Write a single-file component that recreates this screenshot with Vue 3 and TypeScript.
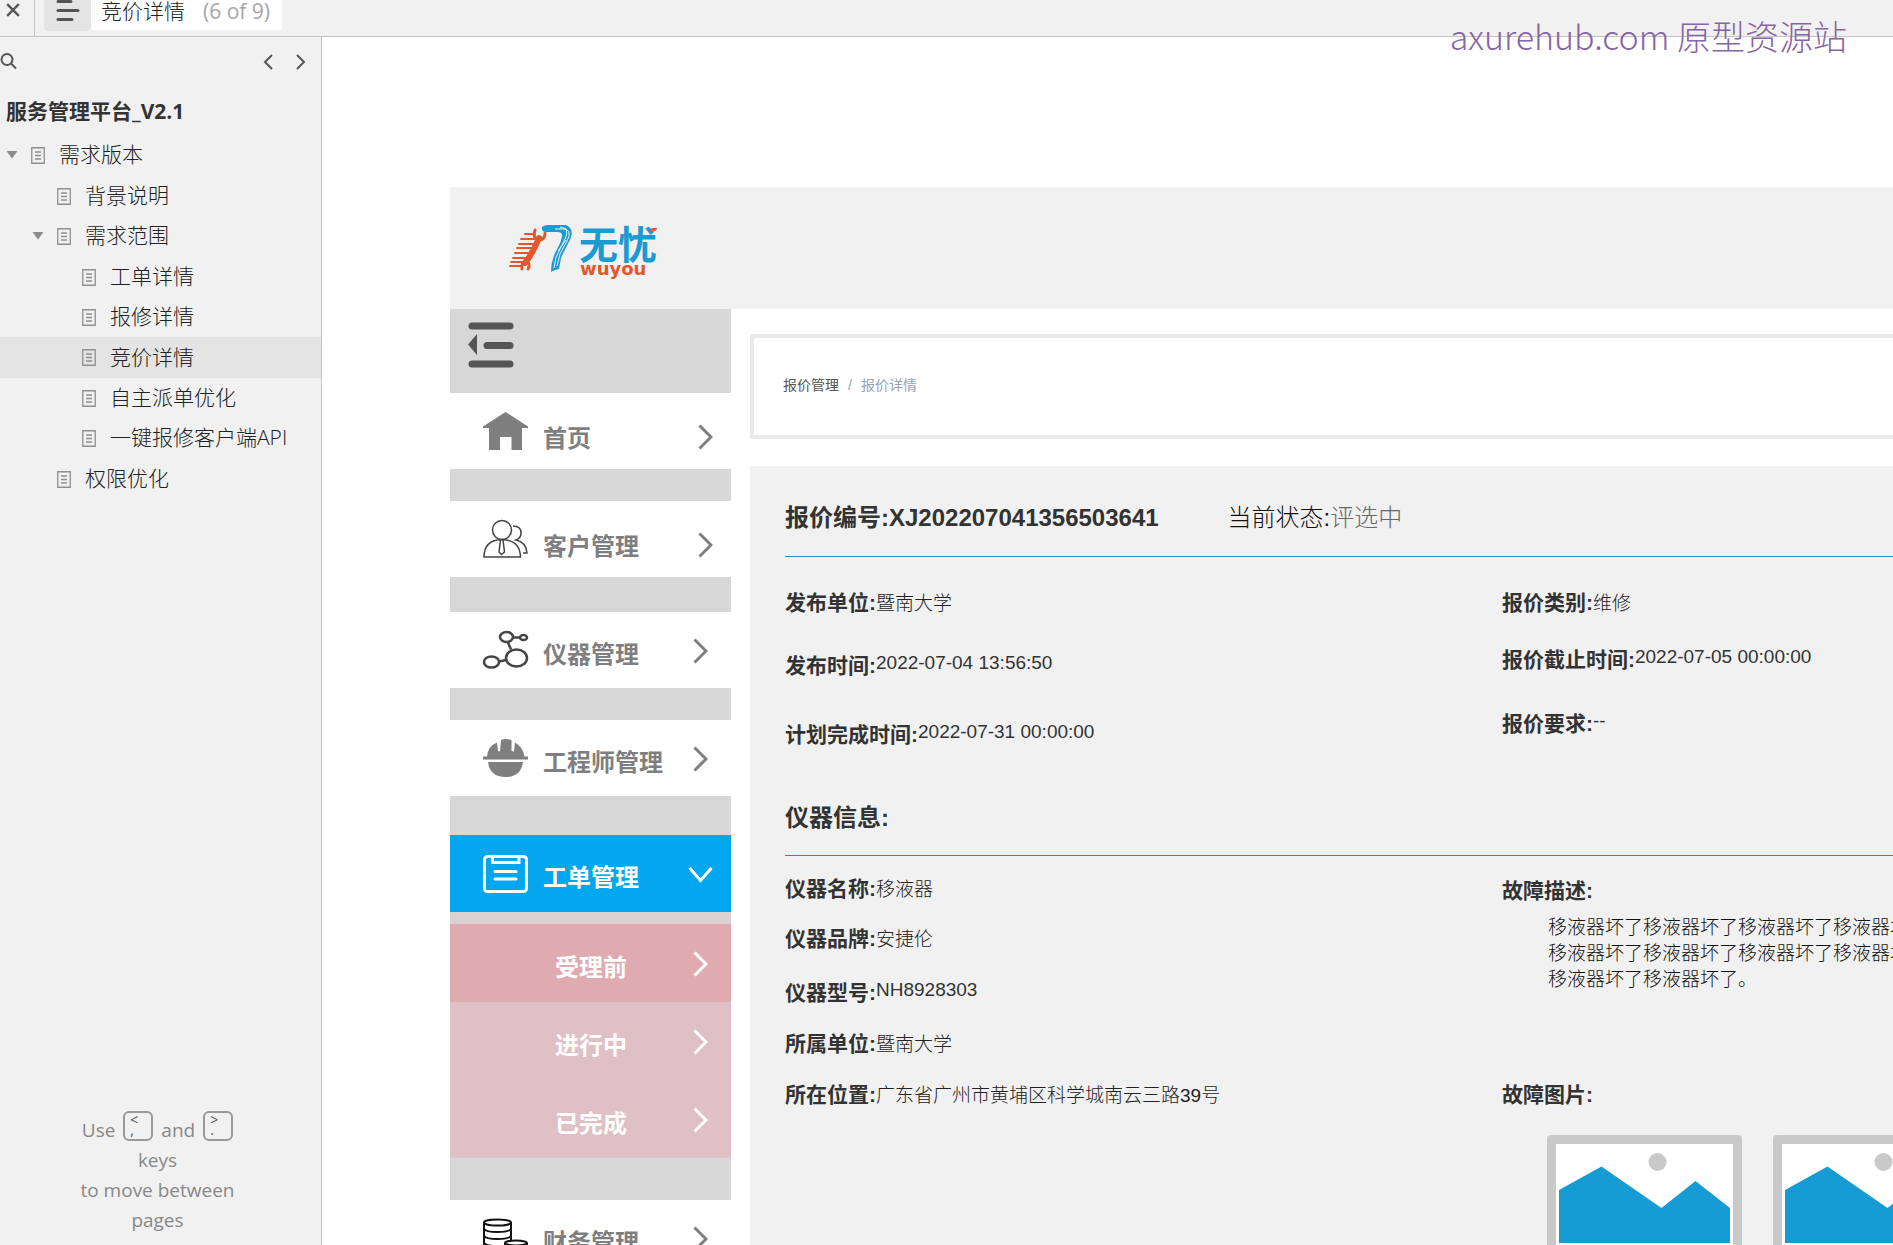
<script setup lang="ts">
type IconName = 'home' | 'users' | 'device' | 'engineer' | 'order' | 'finance'

interface TreeRow {
  name: string
  level: 1 | 2 | 3
  branch?: boolean
  current?: boolean
  turn?: boolean
}

interface MenuEntry {
  name: string
  icon: IconName
  gap: 'none' | 'small' | 'medium' | 'large' | 'huge'
  flush?: boolean
  open?: boolean
  children?: { name: string; current?: boolean }[]
}

interface Fact {
  label: string
  value: string
  latin?: boolean
}

const treeRows: TreeRow[] = [
  { name: '需求版本', level: 1, branch: true },
  { name: '背景说明', level: 2, turn: true },
  { name: '需求范围', level: 2, branch: true },
  { name: '工单详情', level: 3, turn: true },
  { name: '报修详情', level: 3 },
  { name: '竞价详情', level: 3, current: true },
  { name: '自主派单优化', level: 3 },
  { name: '一键报修客户端API', level: 3 },
  { name: '权限优化', level: 2, turn: true },
]

const menu: MenuEntry[] = [
  { name: '首页', icon: 'home', gap: 'none', flush: true },
  { name: '客户管理', icon: 'users', gap: 'small', flush: true },
  { name: '仪器管理', icon: 'device', gap: 'medium' },
  { name: '工程师管理', icon: 'engineer', gap: 'small' },
  {
    name: '工单管理',
    icon: 'order',
    gap: 'large',
    open: true,
    children: [{ name: '受理前', current: true }, { name: '进行中' }, { name: '已完成' }],
  },
  { name: '财务管理', icon: 'finance', gap: 'huge' },
]

const quoteLeft: Fact[] = [
  { label: '发布单位:', value: '暨南大学' },
  { label: '发布时间:', value: '2022-07-04 13:56:50', latin: true },
  { label: '计划完成时间:', value: '2022-07-31 00:00:00', latin: true },
]

const quoteRight: Fact[] = [
  { label: '报价类别:', value: '维修' },
  { label: '报价截止时间:', value: '2022-07-05 00:00:00', latin: true },
  { label: '报价要求:', value: '--', latin: true },
]

const device: Fact[] = [
  { label: '仪器名称:', value: '移液器' },
  { label: '仪器品牌:', value: '安捷伦' },
  { label: '仪器型号:', value: 'NH8928303', latin: true },
  { label: '所属单位:', value: '暨南大学' },
  { label: '所在位置:', value: '广东省广州市黄埔区科学城南云三路39号' },
]

const phrase = '移液器坏了'
const faultLines: string[] = [phrase.repeat(4), phrase.repeat(4), phrase.repeat(2) + '。']
</script>

<template>
  <div class="app">
    <header class="topbar">
      <button class="close" type="button" aria-label="关闭">
        <svg width="14" height="14" viewBox="0 0 12 12"><path d="M1 1 11 11M11 1 1 11" stroke="#555" stroke-width="2" fill="none" /></svg>
      </button>
      <button class="pages" type="button" aria-label="页面列表">
        <svg width="24" height="22" viewBox="0 0 24 22">
          <path d="M2 1.500H15M2 10.500H22M2 19.500H16" stroke="#555" stroke-width="3" stroke-linecap="round" fill="none" />
        </svg>
      </button>
      <div class="page-tab"><span>竞价详情</span><span class="count">(6 of 9)</span></div>
    </header>

    <div class="body">
      <aside class="sidebar">
        <div class="tools">
          <button type="button" aria-label="搜索">
            <svg width="17" height="17" viewBox="0 0 17 17"><circle cx="7" cy="6.500" r="5.500" /><path d="M11 10.500 16 15.500" /></svg>
          </button>
          <span class="spacer"></span>
          <button type="button" aria-label="上一页">
            <svg width="10" height="16" viewBox="0 0 10 16"><path d="M9 1 2 8 9 15" /></svg>
          </button>
          <button type="button" aria-label="下一页">
            <svg width="10" height="16" viewBox="0 0 10 16"><path d="M1 1 8 8 1 15" /></svg>
          </button>
        </div>
        <h1>服务管理平台_V2.1</h1>
        <nav class="tree">
          <a
            v-for="row in treeRows"
            :key="row.name"
            href="#"
            :class="['level-' + row.level, { current: row.current, turn: row.turn }]"
          >
            <span class="twist"><svg v-if="row.branch" width="12" height="8" viewBox="0 0 12 8"><path d="M0.500 0H11.500L6 7.500Z" fill="#8c8c8c" /></svg></span>
            <svg class="sheet" width="14" height="17" viewBox="0 0 14 17">
              <path d="M0.750 0.750H13.250V16.250H0.750ZM4 5H10M4 8.500H10M4 12H10" stroke="#8f8f8f" stroke-width="1.300" fill="none" />
            </svg>
            <span>{{ row.name }}</span>
          </a>
        </nav>
        <div class="hint">
          <div class="hint-keys">
            <span>Use</span>
            <kbd><span>&lt;</span><span>,</span></kbd>
            <span>and</span>
            <kbd><span>&gt;</span><span>.</span></kbd>
          </div>
          <div>keys</div>
          <div>to move between</div>
          <div>pages</div>
        </div>
      </aside>

      <main class="canvas">
        <div class="brand">
          <svg width="156" height="56" viewBox="0 0 156 56" role="img" aria-label="17无忧">
            <g stroke="#e2582c" fill="none" stroke-linecap="round">
              <path d="M31 15Q25 30 17 40" stroke-width="6" />
              <path d="M27 7Q24 15 31 17Q37 17 37 10" stroke-width="3" />
              <path d="M14 46Q13 39 18 38Q23 40 20 46" stroke-width="3" />
              <path d="M17 11H27M13 16H27M11 21H26M9 25H24M7 30H22M5 35H20M3 39H18M2 43H14" stroke-width="2" />
            </g>
            <path d="M34 4Q36 2 40 2H58Q67 6 62 17Q57 26 53 35L51 46L47 47L43 49Q43 38 48 28Q54 18 54 12Q54 9 49 9H38Q33 9 34 4Z" fill="#1c9ad2" />
            <path d="M47 6H57Q61 9 56 18L48 34L46 45M52 4Q66 6 59 18L52 31L49 43M50 28L58 17" stroke="#f1f1f1" stroke-width="1" fill="none" />
            <text class="brand-name" x="71" y="36">无忧</text>
            <text class="brand-latin" x="72" y="52">wuyou</text>
            <path d="M141 9Q143 4 149 5Q149 9 141 9Z" fill="#e2582c" />
          </svg>
        </div>

        <div class="columns">
          <nav class="menu">
            <button class="collapse" type="button" aria-label="收起菜单">
              <svg width="46" height="46" viewBox="0 0 46 46">
                <path d="M4 4H42M19 23.500H42M4 42H42" stroke="#555" stroke-width="7" stroke-linecap="round" />
                <path d="M0 22.500 9 12V33Z" fill="#555" />
              </svg>
            </button>
            <template v-for="entry in menu" :key="entry.name">
              <button type="button" :class="['entry', 'gap-' + entry.gap, { flush: entry.flush, open: entry.open }]">
                <svg v-if="entry.icon === 'home'" class="icon" viewBox="0 0 45 38">
                  <path d="M22.500 0 45 14.500V16H39V38H28.500V25H17V38H6V16H0V14.500Z" fill="#7f7f7f" />
                </svg>
                <svg v-else-if="entry.icon === 'users'" class="icon line" viewBox="0 0 45 38">
                  <ellipse cx="19" cy="10" rx="9.500" ry="9.500" />
                  <path d="M1 37Q1 20 19 19.500Q37 20 37.500 37Z" />
                  <path d="M30 6Q38 6 38 13Q38 18 33 20Q43 22 44 33H40M17.500 20 16 32 18.500 34.500 21.500 32 20 20" />
                </svg>
                <svg v-else-if="entry.icon === 'device'" class="icon node" viewBox="0 0 45 38">
                  <ellipse cx="23.500" cy="6" rx="6.500" ry="5" />
                  <ellipse cx="40.500" cy="6.500" rx="3.500" ry="2.500" />
                  <ellipse cx="33.500" cy="27" rx="10.500" ry="8.500" />
                  <ellipse cx="8.500" cy="31" rx="7.500" ry="5.500" />
                  <path d="M30 6.500H37M25 11.500 28 18.500M16 30.500 23 29" />
                </svg>
                <svg v-else-if="entry.icon === 'engineer'" class="icon" viewBox="0 0 45 38">
                  <path d="M4 17.500Q5 7 14 3.500L15 12L17 12.500L18 1Q23-1 28.500 1V12L31 12.500L32 3.500Q40 8 41.500 17.500H45V20.500H0V17.500ZM5 23H40Q38 38 22.500 38Q7 38 5 23Z" fill="#7f7f7f" />
                </svg>
                <svg v-else-if="entry.icon === 'order'" class="icon" viewBox="0 0 45 38">
                  <g stroke="#fff" stroke-width="3" fill="none" stroke-linecap="round">
                    <rect x="1.500" y="1.500" width="42" height="35" rx="3" />
                    <path d="M9.500 2V7.500H36V2M12 16.500H33M12 24H33" />
                  </g>
                </svg>
                <svg v-else class="icon coins" viewBox="0 0 45 38">
                  <ellipse cx="14.500" cy="3.500" rx="13.500" ry="3" />
                  <path d="M1 3.500V38M28 3.500V22M1 10Q3 13 14.500 13T28 10M1 17Q3 20 14.500 20T28 17M1 24Q3 27 14.500 27H21M1 31Q3 34 14.500 34H21" />
                  <ellipse cx="33" cy="24" rx="11" ry="2.500" />
                  <path d="M22 24V38M44 24V38M22 31Q24 33 33 33T44 31" />
                </svg>
                <span class="label">{{ entry.name }}</span>
                <span class="arrow">
                  <svg v-if="entry.open" width="25" height="17" viewBox="0 0 25 17"><path d="M1.500 2 12.500 14.500 23.500 2" /></svg>
                  <svg v-else width="15" height="26" viewBox="0 0 15 26"><path d="M1.500 1.500 13 13 1.500 24.500" /></svg>
                </span>
              </button>
              <div v-if="entry.children" class="children">
                <button v-for="child in entry.children" :key="child.name" type="button" :class="['child', { current: child.current }]">
                  <span class="label">{{ child.name }}</span>
                  <span class="arrow"><svg width="15" height="26" viewBox="0 0 15 26"><path d="M1.500 1.500 13 13 1.500 24.500" /></svg></span>
                </button>
              </div>
            </template>
          </nav>

          <div class="content">
            <div class="crumbs">
              <a href="#">报价管理</a><span>/</span><span>报价详情</span>
            </div>

            <section class="panel">
              <div class="panel-head">
                <h2>报价编号:XJ202207041356503641</h2>
                <div class="status">当前状态:<span>评选中</span></div>
              </div>
              <div class="pair quote">
                <dl class="quote-left">
                  <div v-for="fact in quoteLeft" :key="fact.label"><dt>{{ fact.label }}</dt><dd :class="{ latin: fact.latin }">{{ fact.value }}</dd></div>
                </dl>
                <dl class="quote-right">
                  <div v-for="fact in quoteRight" :key="fact.label"><dt>{{ fact.label }}</dt><dd :class="{ latin: fact.latin }">{{ fact.value }}</dd></div>
                </dl>
              </div>

              <div class="panel-head second"><h2>仪器信息:</h2></div>
              <div class="pair device">
                <dl class="device-left">
                  <div v-for="fact in device" :key="fact.label"><dt>{{ fact.label }}</dt><dd :class="{ latin: fact.latin }">{{ fact.value }}</dd></div>
                </dl>
                <div class="fault">
                  <h3>故障描述:</h3>
                  <div class="fault-text">
                    <div v-for="(line, index) in faultLines" :key="index">{{ line }}</div>
                  </div>
                  <h3>故障图片:</h3>
                  <div class="photos">
                    <svg v-for="n in 2" :key="n" width="195" height="140" viewBox="0 0 195 140">
                      <rect width="195" height="140" rx="4" fill="#c9c9c9" />
                      <rect x="9" y="9" width="177" height="122" fill="#fff" />
                      <circle cx="110.500" cy="27" r="9" fill="#c9c9c9" />
                      <path d="M12 55 54.500 31.500 114.500 73 148.500 46 183 73V108H12Z" fill="#169bd5" />
                    </svg>
                  </div>
                </div>
              </div>
            </section>
          </div>
        </div>
      </main>
    </div>

    <div class="watermark">axurehub.com 原型资源站</div>
  </div>
</template>

<style>
body {
  margin: 0;
  overflow: hidden;
}
</style>

<style scoped>
.app {
  position: relative;
  display: flex;
  flex-direction: column;
  height: 100vh;
  overflow: hidden;
  background: #fff;
  color: #333;
  font-family: "Liberation Sans", "Noto Sans CJK SC", sans-serif;
}
button {
  border: 0;
  padding: 0;
  background: none;
  font: inherit;
  color: inherit;
  text-align: left;
}
a {
  color: inherit;
  text-decoration: none;
}
h1, h2, h3, dl, dd {
  margin: 0;
}
svg {
  display: block;
  flex: none;
}

.topbar {
  display: flex;
  align-items: flex-start;
  flex: none;
  height: 36px;
  background: #f1f1f1;
  border-bottom: 1px solid #c4c4c4;
  font-family: "Open Sans", "Noto Sans CJK SC", sans-serif;
}
.close {
  box-sizing: border-box;
  width: 35px;
  height: 36px;
  padding: 0 0 17px 6px;
  border-right: 1px solid #c4c4c4;
}
.pages {
  width: 47px;
  height: 31px;
  margin-left: 9px;
  padding: 0 0 9px 12px;
  background: #e4e4e4;
  border-radius: 0 0 4px 4px;
}
.page-tab {
  display: flex;
  gap: 18px;
  height: 30px;
  padding: 0 12px 0 10px;
  background: #fff;
  color: #222;
  font-size: 21px;
  line-height: 22px;
  font-weight: 300;
}
.count {
  color: #a6a6a6;
  font-weight: 400;
}

.body {
  display: flex;
  flex: 1;
  min-height: 0;
}
.sidebar {
  display: flex;
  flex-direction: column;
  flex: none;
  width: 321px;
  background: #f1f1f1;
  border-right: 1px solid #c4c4c4;
  font-family: "Open Sans", "Noto Sans CJK SC", sans-serif;
}
.tools {
  display: flex;
  gap: 23px;
  padding: 16px 15px 0 0;
}
.tools svg {
  fill: none;
  stroke: #555;
  stroke-width: 2;
}
.spacer {
  flex: 1;
}
.sidebar h1 {
  margin: 26px 0 9px;
  padding-left: 6px;
  font-size: 21px;
  line-height: 30px;
}
.tree {
  display: flex;
  flex-direction: column;
}
.tree a {
  display: flex;
  align-items: center;
  height: 40px;
  color: #222;
  font-size: 21px;
  font-weight: 300;
  line-height: 30px;
  white-space: nowrap;
}
.tree a > span:last-child {
  padding-bottom: 2px;
}
.tree .turn {
  margin-top: 1px;
}
.tree .current {
  height: 41px;
  background: #e4e4e4;
}
.level-1 {
  padding-left: 6px;
}
.level-2 {
  padding-left: 32px;
}
.level-3 {
  padding-left: 57px;
}
.twist {
  width: 25px;
}
.sheet {
  margin-right: 14px;
}
.hint {
  margin-top: auto;
  padding: 0 6px 10px 0;
  color: #888;
  font-size: 19px;
  line-height: 30px;
  text-align: center;
}
.hint-keys {
  display: flex;
  justify-content: center;
  align-items: center;
  gap: 8px;
}
.hint-keys > span {
  padding-top: 8px;
}
kbd {
  display: flex;
  flex-direction: column;
  box-sizing: border-box;
  width: 30px;
  height: 30px;
  padding: 2px 0 0 5px;
  border: 2px solid #999;
  border-radius: 6px;
  color: #555;
  font-family: "Open Sans", sans-serif;
  font-size: 14px;
  line-height: 10px;
  text-align: left;
}

.canvas {
  flex: 1;
  min-width: 0;
  padding: 150px 0 0 128px;
}
.brand {
  height: 86px;
  padding: 36px 0 0 58px;
  background: #f1f1f1;
}
.brand svg {
  overflow: visible;
}
.brand-name {
  fill: #1c9ad2;
  font-family: "Noto Sans CJK SC", sans-serif;
  font-size: 39px;
  font-weight: 700;
}
.brand-latin {
  fill: #e2582c;
  font-family: "DejaVu Sans", sans-serif;
  font-size: 18px;
  font-weight: 700;
}
.columns {
  display: flex;
  align-items: flex-start;
}
.menu {
  display: flex;
  flex-direction: column;
  flex: none;
  width: 281px;
  background: #d7d7d7;
  color: #7f7f7f;
  font-size: 24px;
  font-weight: 700;
  line-height: 32px;
}
.collapse {
  height: 84px;
  padding: 0 0 12px 18px;
}
.entry {
  display: flex;
  align-items: center;
  height: 76px;
  padding: 0 18px 0 33px;
  background: #fff;
}
.entry .label {
  flex: 1;
  padding: 9px 0 0 15px;
}
.icon {
  width: 45px;
  height: 38px;
  overflow: visible;
}
.line, .node, .coins {
  fill: none;
  stroke: #444;
  stroke-width: 1.5;
}
.node {
  stroke-width: 2.5;
}
.coins {
  stroke: #111;
  stroke-width: 2;
}
.arrow {
  display: flex;
  justify-content: center;
  width: 25px;
  padding-top: 1px;
}
.arrow svg {
  fill: none;
  stroke: currentColor;
  stroke-width: 3;
}
.flush .label {
  padding-top: 15px;
}
.flush .arrow {
  justify-content: flex-end;
  padding-top: 11px;
}
.gap-small {
  margin-top: 32px;
}
.gap-medium {
  margin-top: 35px;
}
.gap-large {
  margin-top: 39px;
}
.gap-huge {
  margin-top: 42px;
}
.open {
  height: 77px;
  background: #02a7f0;
  color: #fff;
}
.children {
  display: flex;
  flex-direction: column;
  padding-top: 12px;
  background: #dad1d3;
  color: #fff;
}
.child {
  display: flex;
  align-items: center;
  height: 78px;
  padding: 0 18px 0 105px;
  background: #dfc0c4;
}
.child.current {
  background: #e0abb0;
}
.child .label {
  flex: 1;
  padding-top: 10px;
}

.content {
  flex: 1;
  min-width: 0;
  padding: 25px 0 0 19px;
}
.crumbs {
  display: flex;
  align-items: center;
  gap: 9px;
  height: 93px;
  padding: 0 29px 4px;
  border: 4px solid #ebebeb;
  border-right: 0;
  color: #555;
  font-size: 14px;
  line-height: 20px;
}
.crumbs span {
  color: #97a0b4;
}
.panel {
  margin-top: 27px;
  padding: 37px 0 100px 35px;
  background: #f1f1f1;
  overflow: hidden;
}
.panel-head {
  display: flex;
  gap: 69px;
  padding-bottom: 23px;
  border-bottom: 1px solid #2b8db8;
  font-size: 24px;
  line-height: 30px;
}
.panel-head h2 {
  font-size: 24px;
}
.panel-head.second {
  margin-top: 53px;
  padding-bottom: 22px;
}
.status {
  color: #111;
  font-weight: 300;
}
.status span {
  color: #666;
}
.pair {
  display: grid;
  grid-template-columns: minmax(0, 11fr) minmax(0, 6fr);
}
.quote {
  margin-top: 31px;
}
.device {
  margin-top: 18px;
}
dl {
  display: grid;
  align-content: start;
}
dl > div {
  display: flex;
  align-items: center;
  height: 30px;
  white-space: nowrap;
}
.quote-left {
  grid-template-rows: 63px 69px 30px;
}
.quote-right {
  grid-template-rows: 57px 64px 30px;
}
.device-left {
  grid-template-rows: 50px 54px 51px 51px 30px;
}
dt, h3 {
  font-size: 21px;
  font-weight: 700;
  line-height: 30px;
}
dd {
  padding-top: 2px;
  color: #222;
  font-size: 19px;
  font-weight: 300;
  line-height: 30px;
}
dd.latin {
  padding: 0 0 6px;
  color: #333;
}
.fault {
  padding-top: 2px;
}
.fault-text {
  height: 165px;
  padding: 9px 0 0 46px;
  overflow: hidden;
  color: #111;
  font-size: 19px;
  font-weight: 300;
  line-height: 26px;
  white-space: nowrap;
}
.photos {
  display: flex;
  gap: 31px;
  padding: 25px 0 0 45px;
  overflow: hidden;
}

.watermark {
  position: absolute;
  top: 12px;
  right: 46px;
  color: #8765a5;
  font-family: "Noto Sans CJK SC", sans-serif;
  font-size: 34px;
  font-weight: 300;
  line-height: 48px;
}
</style>
